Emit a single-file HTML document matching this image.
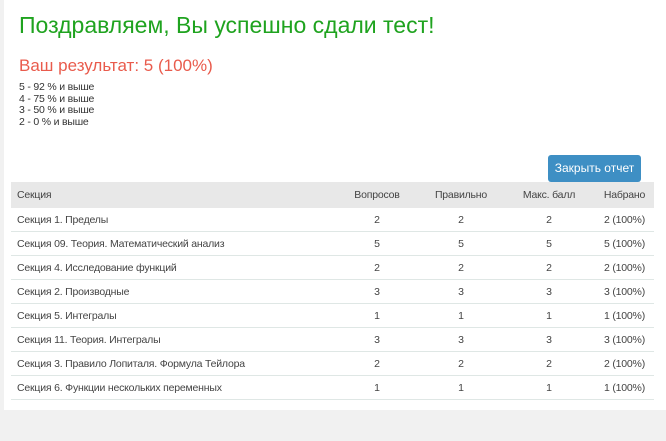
<!DOCTYPE html>
<html><head><meta charset="utf-8"><style>
body{margin:0;background:#f1f1f1;width:666px;height:441px;overflow:hidden;font-family:"Liberation Sans",sans-serif;}
.panel{position:absolute;left:4px;top:0;width:662px;height:410px;background:#fff;}
h1{position:absolute;left:19px;top:12px;margin:0;font-size:23px;font-weight:normal;color:#1fa31f;}
h2{position:absolute;left:19px;top:56px;margin:0;font-size:17px;font-weight:normal;color:#e95b4c;}
.leg{position:absolute;left:19px;top:82px;font-size:10.5px;line-height:11.7px;color:#333;letter-spacing:-0.2px;}
.btn{position:absolute;left:548px;top:155px;width:93px;height:27px;background:#3e8fc4;border-radius:3px;color:#fff;font-size:12px;line-height:27px;text-align:center;}
table{position:absolute;left:11px;top:182px;width:643px;border-collapse:collapse;font-size:10.5px;color:#444;letter-spacing:-0.2px;}
th{background:#e8e8e8;font-weight:normal;height:26px;padding:0;}
td{height:23px;border-bottom:1px solid #dfe7e5;padding:0;text-align:center;}
th:first-child,td:first-child{text-align:left;padding-left:6px;}
</style></head><body>
<div class="panel"></div>
<h1>Поздравляем, Вы успешно сдали тест!</h1>
<h2>Ваш результат: 5 (100%)</h2>
<div class="leg">5 - 92 % и выше<br>4 - 75 % и выше<br>3 - 50 % и выше<br>2 - 0 % и выше</div>
<div class="btn">Закрыть отчет</div>
<table>
<colgroup><col style="width:324px"><col style="width:84px"><col style="width:84px"><col style="width:92px"><col style="width:59px"></colgroup>
<tr><th>Секция</th><th>Вопросов</th><th>Правильно</th><th>Макс. балл</th><th>Набрано</th></tr>
<tr><td>Секция 1. Пределы</td><td>2</td><td>2</td><td>2</td><td>2 (100%)</td></tr>
<tr><td>Секция 09. Теория. Математический анализ</td><td>5</td><td>5</td><td>5</td><td>5 (100%)</td></tr>
<tr><td>Секция 4. Исследование функций</td><td>2</td><td>2</td><td>2</td><td>2 (100%)</td></tr>
<tr><td>Секция 2. Производные</td><td>3</td><td>3</td><td>3</td><td>3 (100%)</td></tr>
<tr><td>Секция 5. Интегралы</td><td>1</td><td>1</td><td>1</td><td>1 (100%)</td></tr>
<tr><td>Секция 11. Теория. Интегралы</td><td>3</td><td>3</td><td>3</td><td>3 (100%)</td></tr>
<tr><td>Секция 3. Правило Лопиталя. Формула Тейлора</td><td>2</td><td>2</td><td>2</td><td>2 (100%)</td></tr>
<tr><td>Секция 6. Функции нескольких переменных</td><td>1</td><td>1</td><td>1</td><td>1 (100%)</td></tr>
</table>
</body></html>
